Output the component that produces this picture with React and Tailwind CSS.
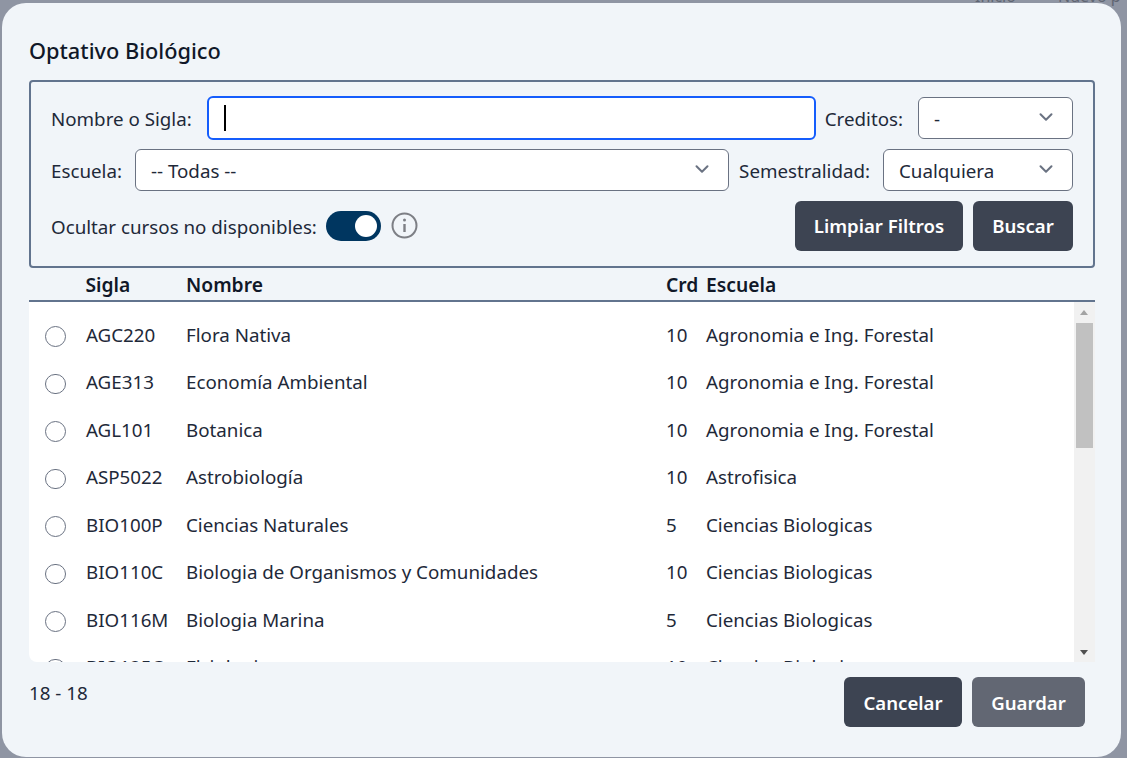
import { ChevronDown } from 'lucide-react';

const courses = [
  { sigla: 'AGC220', nombre: 'Flora Nativa', crd: 10, escuela: 'Agronomia e Ing. Forestal' },
  { sigla: 'AGE313', nombre: 'Economía Ambiental', crd: 10, escuela: 'Agronomia e Ing. Forestal' },
  { sigla: 'AGL101', nombre: 'Botanica', crd: 10, escuela: 'Agronomia e Ing. Forestal' },
  { sigla: 'ASP5022', nombre: 'Astrobiología', crd: 10, escuela: 'Astrofisica' },
  { sigla: 'BIO100P', nombre: 'Ciencias Naturales', crd: 5, escuela: 'Ciencias Biologicas' },
  { sigla: 'BIO110C', nombre: 'Biologia de Organismos y Comunidades', crd: 10, escuela: 'Ciencias Biologicas' },
  { sigla: 'BIO116M', nombre: 'Biologia Marina', crd: 5, escuela: 'Ciencias Biologicas' },
  { sigla: 'BIO125C', nombre: 'Fisiologia', crd: 10, escuela: 'Ciencias Biologicas' },
];

const Select = ({ value, className }) => (
  <div className={`flex items-center justify-between h-[42px] pl-[15px] pr-[15px] bg-white border border-gray-500 rounded-md ${className}`}>
    <span className="pt-[3px]">{value}</span>
    <ChevronDown className="w-[22px] h-[22px] text-gray-500 -mt-[2px]" strokeWidth={2.2} />
  </div>
);

const Button = ({ children, className }) => (
  <button className={`h-[50px] rounded-md text-white font-semibold text-[18.6px] ${className}`}>{children}</button>
);

const App = () => {
  return (
    <div className="relative h-[758px] overflow-hidden bg-[#8f95a3] pt-[3px] pl-[2px] pr-[6px] pb-px font-['Noto_Sans',sans-serif] text-[18.75px] text-gray-800">
      <span className="absolute top-[-12px] left-[975px] text-[16px] leading-[16px] text-[#5f6572]">Inicio</span>
      <span className="absolute top-[-12px] left-[1058px] text-[16px] leading-[16px] text-[#5f6572]">Nuevo p</span>
      <div className="relative flex flex-col h-full bg-[#f1f5f9] rounded-[24px] pl-[27px] pr-[26px]">
        <h2 className="mt-[35px] h-[26px] leading-[26px] text-[21.75px] font-medium text-gray-900">Optativo Biológico</h2>

        <div className="mt-[16px] h-[188px] border-2 border-slate-500 rounded pt-[15px] pl-[20px] pr-[20px]">
          <div className="flex items-center h-[42px]">
            <label className="pt-[3px] mr-[15px]">Nombre o Sigla:</label>
            <div className="flex-1 flex items-center h-[44px] pl-[15px] bg-white border-2 border-blue-600 rounded-md">
              <div className="w-[2px] h-[26px] bg-black"></div>
            </div>
            <label className="pt-[3px] ml-[9px] mr-[15px]">Creditos:</label>
            <Select value="-" className="w-[155px]" />
          </div>
          <div className="flex items-center h-[42px] mt-[10px]">
            <label className="pt-[3px] mr-[13px]">Escuela:</label>
            <Select value="-- Todas --" className="flex-1" />
            <label className="pt-[3px] ml-[10px] mr-[13px]">Semestralidad:</label>
            <Select value="Cualquiera" className="w-[190px]" />
          </div>
          <div className="flex items-center justify-between h-[50px] mt-[10px]">
            <div className="flex items-center">
              <label className="pt-[3px] mr-[9px]">Ocultar cursos no disponibles:</label>
              <div className="flex items-center justify-end w-[55px] h-[30px] pr-[4px] bg-[#003660] rounded-full">
                <div className="w-[22px] h-[22px] bg-white rounded-full"></div>
              </div>
              <svg className="ml-[10px] -mt-[2px] text-[#7d7f85]" width="27" height="27" viewBox="0 0 27 27" fill="none" stroke="currentColor">
                <circle cx="13.5" cy="13.5" r="12" strokeWidth="2" />
                <path d="M13.5 12v8" strokeWidth="2.4" />
                <circle cx="13.5" cy="8" r="1.5" fill="currentColor" stroke="none" />
              </svg>
            </div>
            <div className="flex gap-[10px]">
              <Button className="w-[168px] bg-[#3d4452]">Limpiar Filtros</Button>
              <Button className="w-[100px] bg-[#3d4452]">Buscar</Button>
            </div>
          </div>
        </div>

        <div className="flex items-center h-[34px] pt-[2px] border-b-2 border-slate-500 font-semibold text-[19.25px] text-gray-900">
          <span className="ml-[56.5px] w-[100.5px]">Sigla</span>
          <span className="w-[480px]">Nombre</span>
          <span className="w-[40px]">Crd</span>
          <span>Escuela</span>
        </div>

        <div className="flex h-[360px] shrink-0 bg-white rounded-bl-lg overflow-hidden">
          <div className="flex-1 overflow-hidden pt-[9px]">
            {courses.map((c) => (
              <div key={c.sigla} className="flex items-center h-[47.5px]">
                <div className="mt-[3px] ml-[16px] mr-[20.5px] w-[20.5px] h-[20.5px] shrink-0 rounded-full border border-gray-500"></div>
                <span className="w-[100px]">{c.sigla}</span>
                <span className="w-[480px]">{c.nombre}</span>
                <span className="w-[40px]">{c.crd}</span>
                <span>{c.escuela}</span>
              </div>
            ))}
          </div>
          <div className="flex flex-col items-center w-[21px] pr-px bg-[#f1f1f1] pt-[8px] pb-[7px]">
            <div className="w-0 h-0 border-x-[4.5px] border-x-transparent border-b-[5px] border-b-[#a3a3a3]"></div>
            <div className="w-[17px] h-[125px] mt-[8px] bg-[#c1c1c1]"></div>
            <div className="mt-auto w-0 h-0 border-x-[4.5px] border-x-transparent border-t-[5px] border-t-[#505050]"></div>
          </div>
        </div>

        <div className="flex justify-between mt-[15px] pr-[10px]">
          <span className="leading-[32px]">18 - 18</span>
          <div className="flex gap-[10px]">
            <Button className="w-[118px] pt-[2px] bg-[#3d4452]">Cancelar</Button>
            <Button className="w-[113px] pt-[2px] bg-[#626773]">Guardar</Button>
          </div>
        </div>
      </div>
    </div>
  );
};

export default App;
